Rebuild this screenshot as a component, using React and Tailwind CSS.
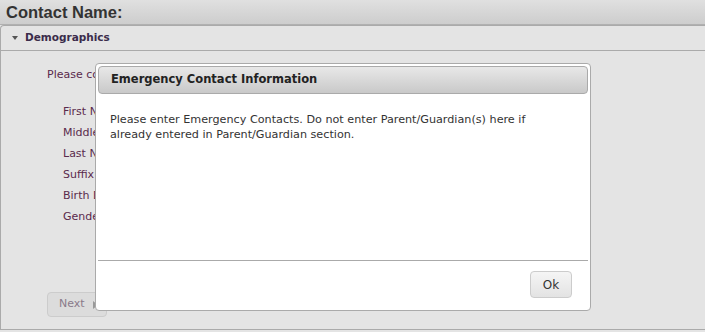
import { useState } from "react";

const labels = ["First Name", "Middle Name", "Last Name", "Suffix", "Birth Date", "Gender"];

function App() {
    const [open, setOpen] = useState(true);

    return (
        <div className="relative w-[705px] h-[332px] overflow-hidden bg-[#e4e4e4] font-['DejaVu_Sans',sans-serif]">
            <div className="h-[25px] bg-gradient-to-b from-[#e0e0e0] to-[#cdcdcd] border-b border-[#b0b0b0] px-[6px] flex items-center">
                <h1 className="font-['Liberation_Sans',Arial,sans-serif] font-bold text-[16.5px] text-[#333]">
                    Contact Name:
                </h1>
            </div>

            <div className="border-l border-t border-b border-[#aaa] rounded-tl-[4px] h-[305px] flex flex-col">
                <div className="h-[25px] border-b border-[#aaa] flex items-center pl-[11px] gap-[7px]">
                    <span className="w-0 h-0 border-l-[3px] border-r-[3px] border-t-[4px] border-l-transparent border-r-transparent border-t-[#555]" />
                    <span className="font-bold text-[10.5px] text-[#3b2c4b]">Demographics</span>
                </div>

                <div className="flex-1 flex flex-col pl-[46px] pt-[16px] text-[11px] text-[#5a2a4c]">
                    <p>Please complete the following information for this contact.</p>
                    <div className="flex flex-col gap-[7px] pl-[16px] pt-[21px]">
                        {labels.map((label) => (
                            <span key={label} className="leading-[14px]">{label}</span>
                        ))}
                    </div>
                    <button className="mt-auto mb-[12px] w-[60px] h-[25px] rounded-[4px] border border-[#ccc] bg-[#dcdcdc] text-[#8a7a8a] text-[11px] flex items-center pl-[11px] gap-[8px]">
                        Next
                        <span className="w-0 h-0 border-t-[4px] border-b-[4px] border-l-[5px] border-t-transparent border-b-transparent border-l-[#999]" />
                    </button>
                </div>
            </div>

            {open && (
                <div className="absolute left-[95px] top-[63px] w-[496px] h-[248px] bg-white border border-[#aaa] rounded-[4px] flex flex-col p-[2px]">
                    <div className="h-[28px] rounded-[4px] border border-[#aaa] bg-gradient-to-b from-[#e8e8e8] to-[#c9c9c9] flex items-center pl-[12px]">
                        <span className="font-bold text-[11.5px] text-[#222]">Emergency Contact Information</span>
                    </div>
                    <p className="px-[12px] pt-[18px] text-[11.2px] leading-[15px] text-[#333] flex-1">
                        Please enter Emergency Contacts. Do not enter Parent/Guardian(s) here if
                        <br />
                        already entered in Parent/Guardian section.
                    </p>
                    <div className="border-t border-[#aaa] h-[48px] flex items-center justify-end pr-[16px]">
                        <button
                            onClick={() => setOpen(false)}
                            className="w-[42px] h-[27px] rounded-[4px] border border-[#ccc] bg-gradient-to-b from-[#f5f5f5] to-[#e3e3e3] text-[12px] text-[#333]"
                        >
                            Ok
                        </button>
                    </div>
                </div>
            )}
        </div>
    );
}

export default App;
